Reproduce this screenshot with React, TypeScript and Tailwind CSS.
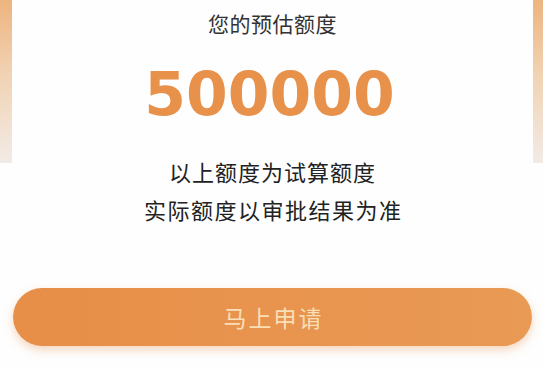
import React from "react";

export default function App() {
  return (
    <div
      className="w-[543px] h-[366px] overflow-hidden bg-[#fefefe] bg-[linear-gradient(to_bottom,#edb47f,#f1d2b3_45%,#f2ebe6)] bg-no-repeat bg-[length:100%_163px]"
      style={{ fontFamily: '"Noto Sans CJK SC", "Noto Sans", sans-serif' }}
    >
      <div className="ml-[12px] mr-[10px] h-full bg-[#fefefe] flex flex-col items-center">
        <div className="mt-[8px] text-[21px] leading-[30px] text-[#333333] tracking-[0.5px]">您的预估额度</div>
        <div
          className="mt-[26px] text-[60px] leading-[60px] font-bold text-[#e8914b] -ml-[6px]"
          style={{ fontFamily: '"DejaVu Sans", sans-serif' }}
        >
          500000
        </div>
        <div className="mt-[29px] text-[22px] leading-[36px] text-[#222222] tracking-[1px]">以上额度为试算额度</div>
        <div className="mt-[2px] text-[22px] leading-[36px] text-[#222222] tracking-[1.5px] pl-[1.5px]">实际额度以审批结果为准</div>
        <div className="mt-[61px] w-[519px] h-[58px] rounded-full bg-[linear-gradient(to_right,#e78e48,#e99a55)] shadow-[0_4px_10px_rgba(230,140,70,0.35)] flex items-center justify-center">
          <span className="text-[23px] text-[#f9dfb6] tracking-[2px] pl-[2px]">马上申请</span>
        </div>
      </div>
    </div>
  );
}
